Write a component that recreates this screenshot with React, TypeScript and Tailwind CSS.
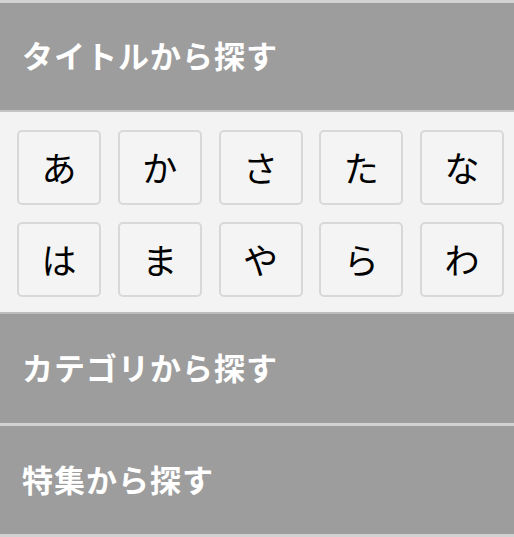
const rows = [
  ['あ', 'か', 'さ', 'た', 'な'],
  ['は', 'ま', 'や', 'ら', 'わ'],
];

function SectionHeader({ label, className = '' }: { label: string; className?: string }) {
  return (
    <div className={`flex items-center bg-[#9d9d9d] pb-[4px] pl-[22px] ${className}`}>
      <span className="text-[31px] font-bold leading-none tracking-[1px] text-white">{label}</span>
    </div>
  );
}

export default function App() {
  return (
    <div
      className="w-[514px] h-[537px] overflow-hidden bg-[#d2d2d2]"
      style={{ fontFamily: '"Noto Sans CJK JP", "Noto Sans", sans-serif' }}
    >
      <div className="h-[3px] bg-[#d2d2d2]" />
      <SectionHeader label="タイトルから探す" className="h-[107px]" />
      <div className="h-[2px] bg-[#c4c4c4]" />
      <div className="h-[200px] bg-[#f3f3f3] pl-[17px] pt-[18px]">
        <div className="flex flex-col gap-[17px]">
          {rows.map((row, i) => (
            <div key={i} className="flex gap-[16.75px]">
              {row.map((kana) => (
                <button
                  key={kana}
                  className="flex h-[75px] w-[84px] items-center justify-center rounded-[5px] border-2 border-[#d8d8d8] bg-[#f4f4f4] pb-[3px] text-[35px] font-normal leading-none text-black"
                >
                  {kana}
                </button>
              ))}
            </div>
          ))}
        </div>
      </div>
      <div className="h-[2px] bg-[#bcbcbc]" />
      <SectionHeader label="カテゴリから探す" className="h-[109px]" />
      <div className="h-[3px] bg-[#d2d2d2]" />
      <SectionHeader label="特集から探す" className="h-[108px]" />
      <div className="h-[3px] bg-[#d2d2d2]" />
    </div>
  );
}
